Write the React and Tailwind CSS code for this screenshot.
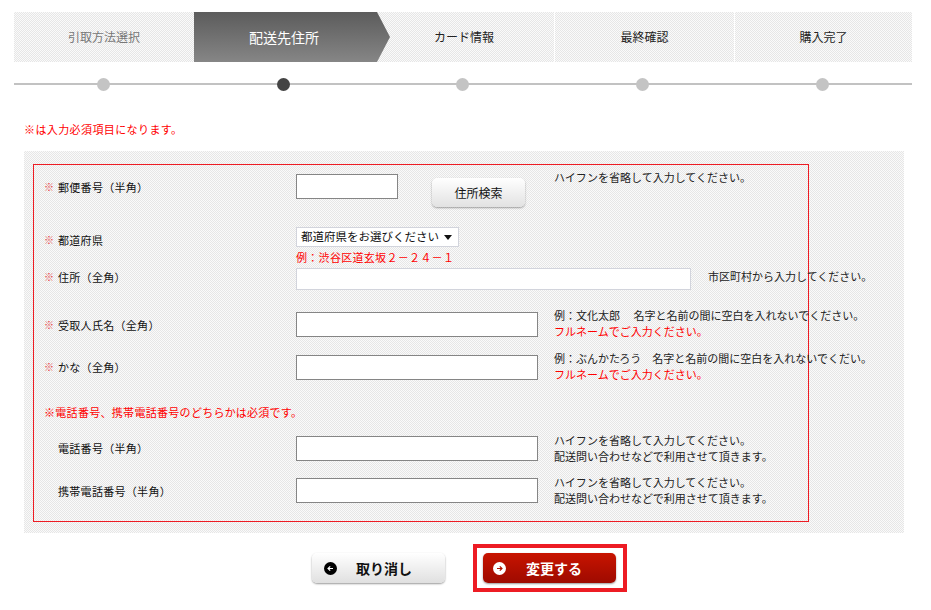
import React from "react";

const checker =
  "bg-[repeating-conic-gradient(#e6e6e6_0%_25%,#fafafa_0%_50%)] bg-[length:2px_2px]";

function Steps() {
  return (
    <div className="ml-[14px] mt-[12px] flex h-[50px] w-[898px]">
      <div className={`flex w-[180px] shrink-0 items-center justify-center text-[12px] text-[#777] ${checker}`}>
        引取方法選択
      </div>
      <div className="relative z-10 flex w-[180px] shrink-0 items-center justify-center bg-gradient-to-b from-[#5c5c5c] to-[#868686] text-[14px] text-white">
        配送先住所
        <div className="absolute top-0 right-[-16px] h-full w-[17px] bg-gradient-to-b from-[#5c5c5c] to-[#868686] [clip-path:polygon(0_0,4px_0,17px_50%,4px_100%,0_100%)]" />
      </div>
      <div className={`flex w-[180px] shrink-0 items-center justify-center text-[12px] text-[#222] ${checker}`}>
        カード情報
      </div>
      <div className={`flex w-[180px] shrink-0 items-center justify-center border-l border-white text-[12px] text-[#222] ${checker}`}>
        最終確認
      </div>
      <div className={`flex w-[178px] shrink-0 items-center justify-center border-l border-white text-[12px] text-[#222] ${checker}`}>
        購入完了
      </div>
    </div>
  );
}

function Timeline() {
  const dots = [false, true, false, false, false];
  return (
    <div className="relative ml-[14px] mt-[16px] h-[13px] w-[898px]">
      <div className="absolute left-0 right-0 top-[5px] h-[2px] bg-[#c2c2c2]" />
      <div className="relative flex h-full">
        {dots.map((a, i) => (
          <div key={i} className="flex flex-1 justify-center">
            <div className={`h-[13px] w-[13px] rounded-full ${a ? "bg-[#444]" : "bg-[#c4c4c4]"}`} />
          </div>
        ))}
      </div>
    </div>
  );
}

function Label({ req, text, top }) {
  return (
    <div className="flex w-[262px] shrink-0 pl-[10px] leading-[16px]" style={{ paddingTop: top }}>
      <span className="w-[14px] shrink-0 text-[10px] text-[#e84545]">{req ? "※" : ""}</span>
      <span className="whitespace-nowrap text-[11px] tracking-[0.3px] text-[#111]">{text}</span>
    </div>
  );
}

function Help({ lines, top, ml = 0 }) {
  return (
    <div className="shrink-0 whitespace-nowrap text-[11px] leading-[16px] text-[#222]" style={{ paddingTop: top, marginLeft: ml }}>
      {lines.map((l, i) => (
        <div key={i} className={l.red ? "text-[#ff0000]" : ""}>
          {l.t}
        </div>
      ))}
    </div>
  );
}

function TextInput({ w, h, top, light }) {
  return (
    <input
      type="text"
      className={`block shrink-0 bg-white outline-none ${light ? "border border-[#d2d4dc]" : "border border-[#858585]"}`}
      style={{ width: w, height: h, marginTop: top }}
    />
  );
}

function StdRow({ h, req, label, labelTop, inputTop, helpTop, lines }) {
  return (
    <div className="flex shrink-0" style={{ height: h }}>
      <Label req={req} text={label} top={labelTop} />
      <div className="w-[258px] shrink-0">
        <TextInput w={242} h={25} top={inputTop} />
      </div>
      <Help lines={lines} top={helpTop} />
    </div>
  );
}

function ArrowIcon({ dir, bg, fg }) {
  return (
    <svg width="13" height="13" viewBox="0 0 13 13" className="shrink-0">
      <circle cx="6.5" cy="6.5" r="6.5" fill={bg} />
      {dir === "left" ? (
        <path d="M6.2 4.3 L4 6.5 L6.2 8.7 M4.2 6.5 H9" stroke={fg} strokeWidth="1.2" fill="none" />
      ) : (
        <path d="M6.8 4.3 L9 6.5 L6.8 8.7 M8.8 6.5 H4" stroke={fg} strokeWidth="1.2" fill="none" />
      )}
    </svg>
  );
}

export default function App() {
  const hyphen = { t: "ハイフンを省略して入力してください。" };
  const contact = { t: "配送問い合わせなどで利用させて頂きます。" };
  return (
    <div
      className="relative h-[610px] w-[931px] overflow-hidden bg-white"
      style={{ fontFamily: '"Noto Sans CJK JP", "Noto Sans", sans-serif' }}
    >
      <Steps />
      <Timeline />

      <div className="ml-[24px] mt-[30px] text-[11px] leading-[16px] tracking-[0.4px] text-[#ff0000]">
        ※は入力必須項目になります。
      </div>

      <div className={`ml-[24px] mt-[14px] w-[880px] pb-[11px] pl-[9px] pt-[13px] ${checker}`}>
        <div className="flex h-[358px] w-[776px] flex-col border border-[#ed1c24]">
          {/* 郵便番号 */}
          <div className="flex h-[52px] shrink-0">
            <Label req text="郵便番号（半角）" top={14} />
            <div className="flex w-[258px] shrink-0 items-start">
              <TextInput w={102} h={25} top={9} />
              <button className="ml-[34px] mt-[13px] h-[29px] w-[93px] shrink-0 rounded-[5px] bg-gradient-to-b from-[#ffffff] to-[#e2e2e2] text-[12px] text-[#111] shadow-[0_1px_2px_rgba(0,0,0,0.35)]">
                住所検索
              </button>
            </div>
            <Help lines={[hyphen]} top={4} />
          </div>

          {/* 都道府県 */}
          <div className="flex h-[49px] shrink-0">
            <Label req text="都道府県" top={15} />
            <div className="shrink-0 pt-[10px]">
              <div className="relative flex h-[20px] w-[163px] items-center border border-[#d2d4dc] bg-white pl-[4px] text-[11.5px] text-[#111]">
                都道府県をお選びください
                <span className="absolute right-[6px] top-[7px] h-0 w-0 border-x-[4px] border-t-[5px] border-x-transparent border-t-[#111]" />
              </div>
              <div className="mt-[2px] whitespace-nowrap text-[11px] leading-[16px] tracking-[0.3px] text-[#ff0000]">
                例：渋谷区道玄坂２－２４－１
              </div>
            </div>
          </div>

          {/* 住所 */}
          <div className="flex h-[34px] shrink-0">
            <Label req text="住所（全角）" top={3} />
            <TextInput w={395} h={22} top={2} light />
            <Help lines={[{ t: "市区町村から入力してください。" }]} top={2} ml={17} />
          </div>

          <StdRow
            h={43}
            req
            label="受取人氏名（全角）"
            labelTop={17}
            inputTop={12}
            helpTop={7}
            lines={[
              { t: "例：文化太郎　 名字と名前の間に空白を入れないでください。" },
              { t: "フルネームでご入力ください。", red: true },
            ]}
          />
          <StdRow
            h={52}
            req
            label="かな（全角）"
            labelTop={16}
            inputTop={12}
            helpTop={7}
            lines={[
              { t: "例：ぶんかたろう　名字と名前の間に空白を入れないでくだい。" },
              { t: "フルネームでご入力ください。", red: true },
            ]}
          />

          <div className="h-[30px] shrink-0 pl-[10px] pt-[9px] text-[11px] leading-[16px] tracking-[0.3px] text-[#ff0000]">
            ※電話番号、携帯電話番号のどちらかは必須です。
          </div>

          <StdRow
            h={43}
            label="電話番号（半角）"
            labelTop={15}
            inputTop={11}
            helpTop={7}
            lines={[hyphen, contact]}
          />
          <StdRow
            h={53}
            label="携帯電話番号（半角）"
            labelTop={15}
            inputTop={10}
            helpTop={6}
            lines={[hyphen, contact]}
          />
        </div>
      </div>

      <div className="mt-[11px] flex items-center justify-center gap-[28px] pl-[8px]">
        <button className="flex h-[30px] w-[133px] items-center rounded-[5px] bg-gradient-to-b from-[#ffffff] to-[#e0e0e0] pl-[12px] text-[14px] font-bold text-[#111] shadow-[0_1px_2px_rgba(0,0,0,0.4)]">
          <ArrowIcon dir="left" bg="#000" fg="#fff" />
          <span className="ml-[19px]">取り消し</span>
        </button>
        <div className="border-[4px] border-[#ed1c24] py-[5px] pl-[6px] pr-[7px]">
          <button className="flex h-[30px] w-[133px] items-center rounded-[5px] bg-gradient-to-b from-[#c81400] to-[#9e0a00] pl-[10px] text-[14px] font-bold text-white shadow-[0_1px_2px_rgba(0,0,0,0.4)]">
            <ArrowIcon dir="right" bg="#fff" fg="#b01000" />
            <span className="ml-[20px]">変更する</span>
          </button>
        </div>
      </div>
    </div>
  );
}
